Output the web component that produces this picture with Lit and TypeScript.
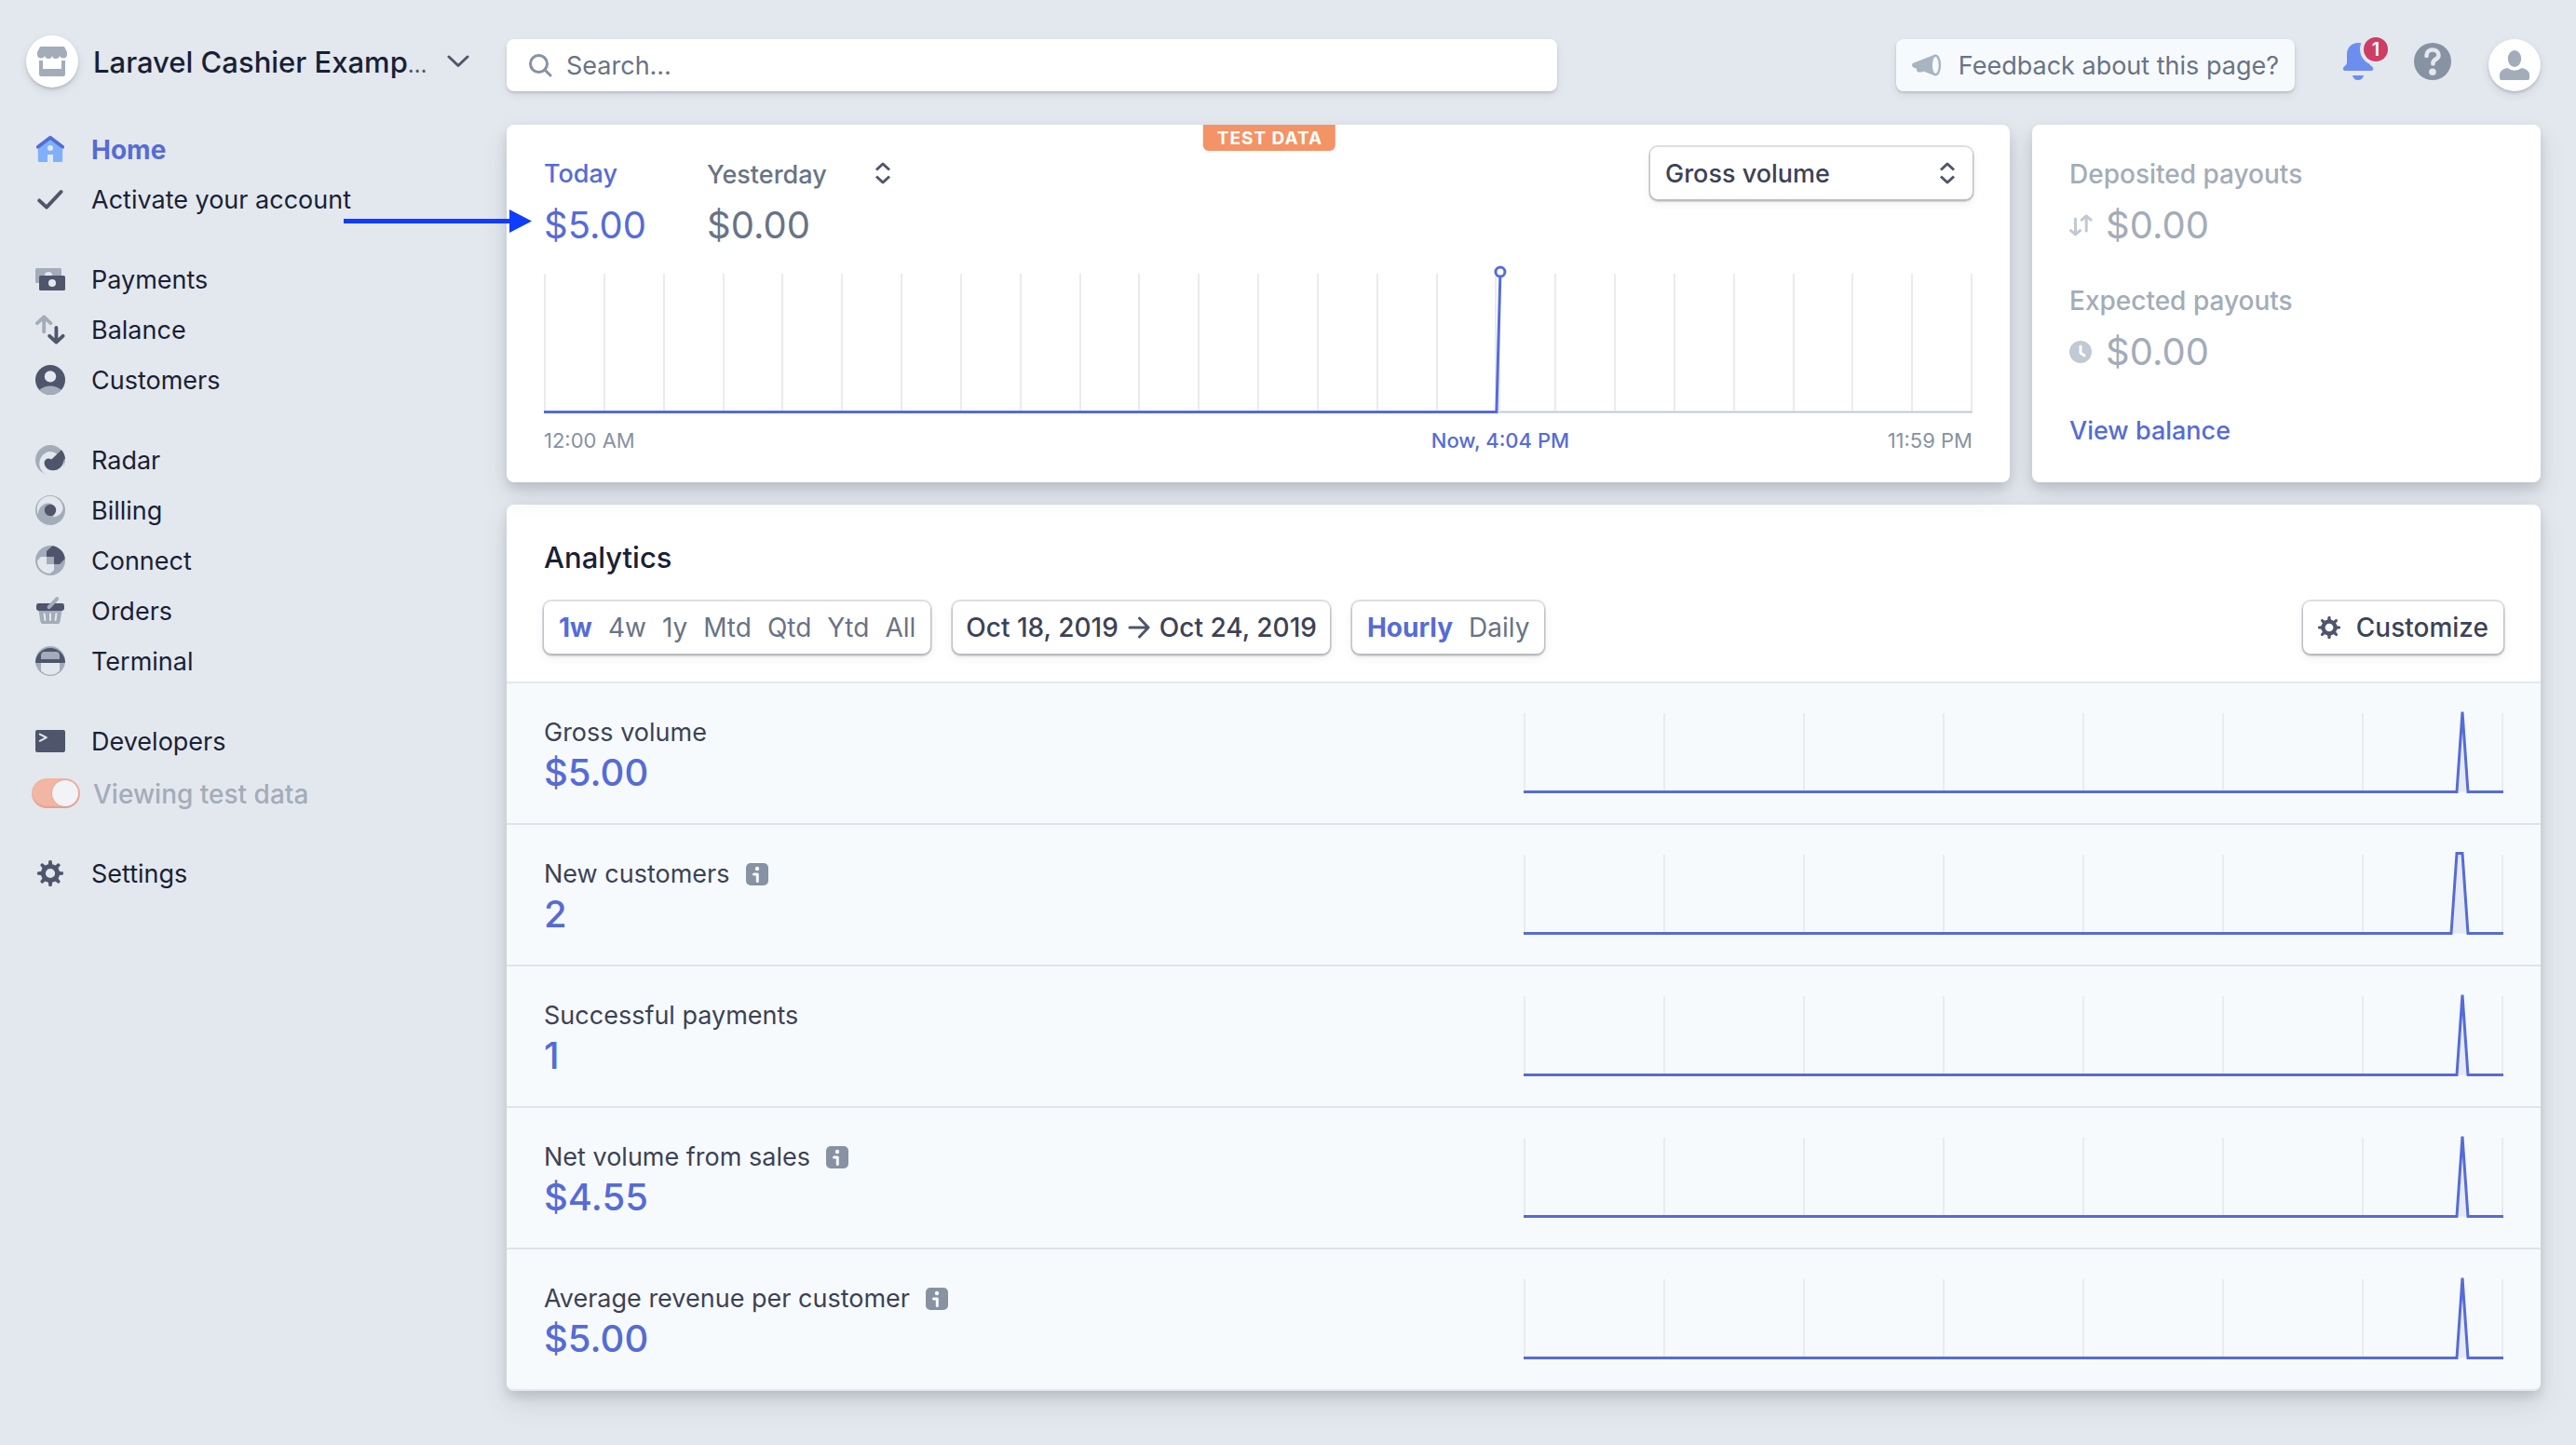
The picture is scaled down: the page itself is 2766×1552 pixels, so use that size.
import { LitElement, html, css, svg, nothing } from "lit";
import { customElement, property } from "lit/decorators.js";
import { classMap } from "lit/directives/class-map.js";

const BG = "#e3e8ee";
const DARK = "#4f566b";
const LIGHT = "#a3acb9";

const gearTeeth = [0, 45, 90, 135, 180, 225, 270, 315];
const gear = svg`
  <circle cx="8" cy="8" r="3.8" fill="none" stroke=${DARK} stroke-width="2.5"></circle>
  ${gearTeeth.map(
    (a) => svg`<path d="M6.8 4 7.2 1.1Q8 .8 8.8 1.1L9.2 4z" fill=${DARK} transform="rotate(${a} 8 8)"></path>`
  )}`;

const icons: Record<string, unknown> = {
  home: svg`
    <path d="M8 2.6 1.4 8v6.2c0 .5.4.8.8.8h4.3v-4h3v4h4.3c.5 0 .8-.3.8-.8V8z" fill="#7fb0f9"></path>
    <path d="M1.4 6.9 8 1.9l6.6 5" fill="none" stroke="#556cd6" stroke-width="1.9" stroke-linecap="round" stroke-linejoin="round"></path>
    <circle cx="8" cy="7.5" r="1.5" fill=${BG}></circle>`,
  check: svg`<path d="M2.1 8.7 6 12.3 13.8 4" fill="none" stroke=${DARK} stroke-width="2" stroke-linecap="round" stroke-linejoin="round"></path>`,
  payments: svg`
    <rect x="0" y="2" width="14" height="8" rx=".8" fill=${LIGHT}></rect>
    <circle cx="7" cy="6" r="2" fill=${BG}></circle>
    <rect x="2" y="6" width="14" height="8" rx=".8" fill=${DARK}></rect>
    <circle cx="9" cy="10" r="2" fill=${BG}></circle>`,
  balance: svg`
    <path d="M4.6 1.4V9.2M1 4.6 4.6 1.2 8.2 4.6" fill="none" stroke=${LIGHT} stroke-width="1.9" stroke-linecap="round" stroke-linejoin="round"></path>
    <path d="M11.2 7v7.6M7.6 11.4l3.6 3.4 3.6-3.4" fill="none" stroke=${DARK} stroke-width="1.9" stroke-linecap="round" stroke-linejoin="round"></path>`,
  customers: svg`
    <circle cx="8" cy="8" r="8" fill=${DARK}></circle>
    <circle cx="8" cy="6.2" r="3.1" fill=${BG}></circle>
    <path d="M2.1 13.4C3.7 12.1 5.7 11.3 8 11.3s4.3.8 5.9 2.1A8 8 0 0 1 2.1 13.4z" fill=${LIGHT}></path>`,
  radar: svg`
    <circle cx="8" cy="8" r="8" fill=${LIGHT}></circle>
    <path d="M15.2 8.6A6.6 6.6 0 1 1 7.4 3.5c1.6 0 2.8.4 4 1.3z" fill=${BG}></path>
    <path d="M14 2.6 8.6 7.7C7 6.5 4.8 7.6 4.8 9.6c.1 2.3 2.1 4 4.6 4C12.8 13.6 15 11.2 15.4 7.6L16 7.4C15.9 5.6 15.2 4 14 2.6z" fill=${DARK}></path>`,
  billing: svg`
    <circle cx="8" cy="8" r="8" fill=${LIGHT}></circle>
    <path d="M1.4 10.2A7 7 0 1 1 14.8 6.8C14.6 9.6 12.4 11.6 9.5 11.6L11 8C10.6 5.6 9 4.3 6.9 4.3 3.8 4.3 1.8 6.8 1.4 10.2z" fill=${BG}></path>
    <circle cx="8" cy="8" r="3.1" fill=${DARK}></circle>`,
  connect: svg`
    <circle cx="8" cy="8" r="8" fill=${LIGHT}></circle>
    <path d="M9.1.1A8 8 0 0 1 15.9 7L13 10H6V3z" fill=${DARK}></path>
    <path d="M3 6h7v7.2L7.9 15A7 7 0 0 1 1 8.1z" fill=${BG}></path>
    <rect x="6" y="6" width="4" height="4" fill=${LIGHT}></rect>`,
  orders: svg`
    <path d="M1.7 7.5h12.6l-1 6.2c-.1.8-.7 1.3-1.5 1.3H4.2c-.8 0-1.4-.5-1.5-1.3z" fill=${LIGHT}></path>
    <path d="M4.8 9.6 5.2 13M8 9.6V13M11.2 9.6 10.8 13" stroke=${BG} stroke-width="1" stroke-linecap="round"></path>
    <rect x=".5" y="4" width="15" height="4" rx="1.2" fill=${DARK}></rect>
    <path d="M7.3 6.1 11.6 1.6" stroke=${LIGHT} stroke-width="2" stroke-linecap="round"></path>`,
  terminal: svg`
    <circle cx="8" cy="8" r="8" fill=${LIGHT}></circle>
    <path d="M0 9A8 8 0 0 1 16 9z" fill=${DARK}></path>
    <path d="M3 7V5a2 2 0 0 1 2-2h6a2 2 0 0 1 2 2v2z" fill=${LIGHT}></path>
    <path d="M3 9h10v4.3a7 7 0 0 1-10 0z" fill=${BG}></path>`,
  developers: svg`
    <rect x="0" y="2" width="16" height="12" rx="1" fill=${DARK}></rect>
    <path d="M2.4 4.3 5.9 6.1 2.4 7.9" fill="none" stroke=${BG} stroke-width="1" stroke-linecap="round" stroke-linejoin="round"></path>`,
  settings: gear,
};

const icon = (name: string) => html`<svg class="icon" viewBox="0 0 16 16" aria-hidden="true">${icons[name]}</svg>`;

const stepper = html`<svg class="stepper" viewBox="0 0 18 24" aria-hidden="true">
  <path d="M2 8.5 9 2l7 6.5M2 15.5 9 22l7-6.5" fill="none" stroke="#4f566b" stroke-width="3" stroke-linejoin="round"></path>
</svg>`;

const navGroups = [
  [
    { icon: "home", label: "Home", active: true },
    { icon: "check", label: "Activate your account" },
  ],
  [
    { icon: "payments", label: "Payments" },
    { icon: "balance", label: "Balance" },
    { icon: "customers", label: "Customers" },
  ],
  [
    { icon: "radar", label: "Radar" },
    { icon: "billing", label: "Billing" },
    { icon: "connect", label: "Connect" },
    { icon: "orders", label: "Orders" },
    { icon: "terminal", label: "Terminal" },
  ],
  [{ icon: "developers", label: "Developers", toggle: true }],
  [{ icon: "settings", label: "Settings" }],
] as { icon: string; label: string; active?: boolean; toggle?: boolean }[][];

const spike = [[0, 0], [1002, 0], [1008, 1], [1014, 0], [1052, 0]];
const plateau = [[0, 0], [996, 0], [1002, 1], [1008, 1], [1014, 0], [1052, 0]];

const metrics = [
  { label: "Gross volume", value: "$5.00", info: false, points: spike },
  { label: "New customers", value: "2", info: true, points: plateau },
  { label: "Successful payments", value: "1", info: false, points: spike },
  { label: "Net volume from sales", value: "$4.55", info: true, points: spike },
  { label: "Average revenue per customer", value: "$5.00", info: true, points: spike },
];

const base = css`
  *,
  *::before {
    box-sizing: border-box;
  }
  :host {
    font-family: Inter, "Liberation Sans", sans-serif;
    font-size: 27px;
    line-height: 40px;
    color: #1a1f36;
  }
  button,
  input,
  select {
    font: inherit;
    color: inherit;
    margin: 0;
    padding: 0;
    border: 0;
    background: none;
  }
  a {
    color: inherit;
    text-decoration: none;
  }
  h1,
  h2,
  p {
    margin: 0;
    font-weight: inherit;
    font-size: inherit;
  }
  svg {
    display: block;
    flex: none;
  }
`;

@customElement("side-nav")
export class SideNav extends LitElement {
  static styles = [
    base,
    css`
      :host {
        display: block;
        padding-top: 38px;
      }
      .account {
        display: flex;
        align-items: center;
        gap: 16px;
        margin-left: 28px;
        height: 56px;
        font-size: 31px;
        font-weight: 500;
      }
      .store {
        border-radius: 50%;
        background: #fff;
        box-shadow: 0 4px 10px rgba(60, 66, 87, 0.12), 0 2px 3px rgba(0, 0, 0, 0.14);
      }
      .account-name {
        white-space: nowrap;
        width: 364px;
        padding-top: 4px;
        text-align: left;
      }
      .more {
        font-size: 24px;
        font-weight: 400;
        color: #4f566b;
      }
      .groups {
        display: grid;
        gap: 32px;
        margin-top: 39px;
      }
      .group {
        list-style: none;
        margin: 0;
        padding: 0;
      }
      .item {
        display: flex;
        align-items: center;
        gap: 28px;
        height: 54px;
        padding-left: 38px;
      }
      .text {
        padding-top: 2px;
      }
      .active {
        color: #556cd6;
        font-size: 28px;
        font-weight: 700;
      }
      .icon {
        width: 32px;
        height: 32px;
      }
      .toggle {
        display: flex;
        align-items: center;
        gap: 14px;
        height: 56px;
        padding: 2px 0 0 34px;
        color: #a3acb9;
        font-size: 28px;
        font-weight: 500;
      }
      .switch {
        appearance: none;
        display: flex;
        justify-content: flex-end;
        width: 52px;
        height: 32px;
        padding: 2px;
        border-radius: 16px;
        background: #f2b6a4;
        box-shadow: inset 0 -2px 1px rgba(210, 120, 110, 0.35);
      }
      .switch::before {
        content: "";
        width: 28px;
        height: 28px;
        border-radius: 50%;
        background: #f1f3f6;
        box-shadow: 0 0 0 1px rgba(210, 140, 125, 0.35);
      }
    `,
  ];

  render() {
    return html`
      <button class="account">
        <svg class="store" width="56" height="56" viewBox="0 0 56 56" aria-hidden="true">
          <path
            d="M16 12h24q1 0 1.500 1l2.500 5v2.500a4 4 0 0 1-8 0 4 4 0 0 1-8 1 4 4 0 0 1-8-1 4 4 0 0 1-8 0V18l2.500-5q.5-1 1.500-1z"
            fill="#a3acb9"
          ></path>
          <path d="M14 27h4v9h20v-9h4v15q0 2-2 2H16q-2 0-2-2z" fill="#a3acb9"></path>
        </svg>
        <span class="account-name">Laravel Cashier Examp<span class="more">…</span></span>
        <svg width="24" height="16" viewBox="0 0 24 16" aria-hidden="true">
          <path d="M2 3 12 12.500 22 3" fill="none" stroke="#4f566b" stroke-width="3" stroke-linecap="round" stroke-linejoin="round"></path>
        </svg>
      </button>
      <nav class="groups" aria-label="Main">
        ${navGroups.map(
          (group) => html`<ul class="group">
            ${group.map(
              (item) => html`<li>
                  <a class=${classMap({ item: true, active: !!item.active })} href="#"
                    >${icon(item.icon)}<span class="text">${item.label}</span></a
                  >
                </li>
                ${item.toggle
                  ? html`<li>
                      <label class="toggle"
                        ><input class="switch" type="checkbox" role="switch" checked disabled /><span class="text"
                          >Viewing test data</span
                        ></label
                      >
                    </li>`
                  : nothing}`
            )}
          </ul>`
        )}
      </nav>
    `;
  }
}

@customElement("top-bar")
export class TopBar extends LitElement {
  static styles = [
    base,
    css`
      :host {
        display: flex;
        align-items: center;
        height: 56px;
      }
      .search {
        display: flex;
        align-items: center;
        gap: 15px;
        flex: 0 1 1128px;
        height: 56px;
        padding: 0 24px;
        border-radius: 8px;
        background: #fff;
        box-shadow: 0 4px 10px rgba(60, 66, 87, 0.08), 0 2px 3px rgba(0, 0, 0, 0.14);
      }
      .field {
        flex: 1;
        min-width: 0;
        padding-top: 2px;
        outline: 0;
      }
      .field::placeholder {
        color: #697386;
        opacity: 1;
      }
      .actions {
        display: flex;
        align-items: center;
        gap: 40px;
        margin-left: auto;
      }
      .feedback {
        display: flex;
        align-items: center;
        gap: 18px;
        height: 56px;
        padding: 0 17px;
        margin-right: 8px;
        border-radius: 8px;
        background: #f7fafc;
        color: #697386;
        white-space: nowrap;
        box-shadow: 0 4px 10px rgba(60, 66, 87, 0.08), 0 2px 3px rgba(0, 0, 0, 0.14);
      }
      .feedback-text {
        padding-top: 2px;
      }
      .round {
        position: relative;
        width: 40px;
        height: 40px;
        margin-bottom: 8px;
      }
      .count {
        position: absolute;
        left: 26px;
        top: -6px;
        width: 26px;
        height: 26px;
        border-radius: 50%;
        background: #cd3d64;
        box-shadow: 0 0 0 4px #e3e8ee;
        color: #fff;
        font-size: 20px;
        font-weight: 600;
        line-height: 26px;
        text-align: center;
      }
      .avatar {
        width: 56px;
        height: 56px;
        border-radius: 50%;
        background: #fff;
        box-shadow: 0 4px 10px rgba(60, 66, 87, 0.12), 0 2px 3px rgba(0, 0, 0, 0.14);
      }
    `,
  ];

  render() {
    return html`
      <label class="search">
        <svg width="25" height="25" viewBox="0 0 25 25" aria-hidden="true">
          <circle cx="10.500" cy="10.500" r="9" fill="none" stroke="#8792a2" stroke-width="3"></circle>
          <path d="M17 17 23 23" stroke="#8792a2" stroke-width="3" stroke-linecap="round"></path>
        </svg>
        <input class="field" type="text" placeholder="Search…" aria-label="Search" />
      </label>
      <div class="actions">
        <button class="feedback">
          <svg width="32" height="24" viewBox="0 0 32 24" aria-hidden="true">
            <path
              d="M25 .4 1.800 9.400Q0 10.300 0 12t1.800 2.600L5 15.800q-.4 3.200 2 3.800 1.800.4 2.600-.6.600 1.600 1.200 .6L12 18.600 25 23.600z"
              fill="#a8b4c2"
            ></path>
            <ellipse cx="25.300" cy="12" rx="4.600" ry="10.300" fill="#f7fafc" stroke="#a8b4c2" stroke-width="2.400"></ellipse>
          </svg>
          <span class="feedback-text">Feedback about this page?</span>
        </button>
        <button class="round" aria-label="Notifications">
          <svg width="40" height="40" viewBox="0 0 40 40" aria-hidden="true">
            <path
              d="M20 0C13 0 8.200 5 8 12v9c0 2-1.200 3-3 4.500Q3.500 27 4 28.500T6 30h28q1.600 0 2.200-1.500T35 25.500C33 24 32 23 32 21V12C31.800 5 27 0 20 0z"
              fill="#6c8eef"
            ></path>
            <path d="M14 35h12q-1 5-6 5t-6-5z" fill="#6c8eef"></path>
          </svg>
          <span class="count">1</span>
        </button>
        <button class="round" aria-label="Help">
          <svg width="40" height="40" viewBox="0 0 40 40" aria-hidden="true">
            <circle cx="20" cy="20" r="20" fill="#8792a2"></circle>
            <path
              d="M13.500 14C13.500 9.800 16.300 7.500 20 7.500S26.500 10 26.500 13.400C26.500 17.600 20.500 17.800 20.500 21.500V22.500"
              fill="none" stroke="#e3e8ee" stroke-width="4.600" stroke-linecap="round"
            ></path>
            <circle cx="20" cy="31.200" r="3.800" fill="#e3e8ee"></circle>
          </svg>
        </button>
        <button class="avatar" aria-label="Profile">
          <svg width="56" height="56" viewBox="0 0 56 56" aria-hidden="true">
            <ellipse cx="28" cy="21" rx="7.200" ry="9" fill="#a3acb9"></ellipse>
            <path d="M20.500 31q3.500 2.800 7.500 2.800t7.500-2.800q8.500 1.500 8.500 7.500v3.500q0 2-2 2H14q-2 0-2-2v-3.500q0-6 8.500-7.500z" fill="#a3acb9"></path>
          </svg>
        </button>
      </div>
    `;
  }
}

@customElement("today-card")
export class TodayCard extends LitElement {
  @property({ type: Number }) minutes = 16 * 60 + 4;

  static styles = [
    base,
    css`
      :host {
        display: block;
        position: relative;
        padding: 24px 40px 29px;
      }
      .badge {
        position: absolute;
        top: 0;
        left: calc(50% + 12px);
        transform: translateX(-50%);
        padding: 2px 14px 0 15px;
        border-radius: 0 0 6px 6px;
        background: #f49365;
        color: #fff;
        font-size: 19px;
        font-weight: 700;
        letter-spacing: 1px;
        line-height: 26px;
        white-space: nowrap;
      }
      .head {
        display: flex;
        align-items: flex-start;
        gap: 64px;
      }
      .label {
        font-weight: 500;
        line-height: 58px;
      }
      .value {
        font-size: 40px;
        line-height: 52px;
      }
      .today {
        min-width: 111px;
        color: #556cd6;
      }
      .previous {
        color: #697386;
      }
      .picker {
        position: relative;
        display: block;
      }
      .select {
        display: block;
        appearance: none;
        width: 100%;
        height: 100%;
        padding-top: 2px;
        font-weight: 500;
        outline: 0;
      }
      .stepper {
        position: absolute;
        right: 18px;
        top: 16px;
        width: 18px;
        height: 24px;
        pointer-events: none;
      }
      .plain {
        width: 216px;
        height: 58px;
      }
      .boxed {
        width: 346px;
        height: 56px;
        margin-left: auto;
        border-radius: 8px;
        color: #3c4257;
        box-shadow: 0 0 0 2px rgba(60, 66, 87, 0.16), 0 2px 1px 1px rgba(0, 0, 0, 0.12), 0 4px 10px rgba(60, 66, 87, 0.1);
      }
      .boxed .select {
        padding-left: 16px;
      }
      .chart {
        width: 100%;
        height: 160px;
        margin-top: 16px;
        overflow: visible;
      }
      .axis {
        position: relative;
        display: flex;
        justify-content: space-between;
        margin-top: 13px;
        color: #8792a2;
        font-size: 22px;
        line-height: 32px;
      }
      .now {
        position: absolute;
        transform: translateX(-50%);
        color: #556cd6;
        font-weight: 500;
        white-space: nowrap;
      }
    `,
  ];

  render() {
    const share = this.minutes / 1440;
    const x = share * 1534;
    const hours = Array.from({ length: 25 }, (_, i) => Math.round(1 + (i * 1532) / 24));
    return html`
      <span class="badge">TEST DATA</span>
      <div class="head">
        <div class="today">
          <p class="label">Today</p>
          <p class="value">$5.00</p>
        </div>
        <div class="previous">
          <label class="picker plain">
            <select class="select" aria-label="Compare with">
              <option>Yesterday</option>
            </select>
            ${stepper}
          </label>
          <p class="value">$0.00</p>
        </div>
        <label class="picker boxed">
          <select class="select" aria-label="Metric">
            <option>Gross volume</option>
          </select>
          ${stepper}
        </label>
      </div>
      <svg class="chart" viewBox="0 0 1534 160" preserveAspectRatio="none" role="img" aria-label="Gross volume today">
        ${hours.map((h) => svg`<path d="M${h} 10V157" stroke="#ebebed" stroke-width="2"></path>`)}
        <path d="M${x - 4} 158.500H1534" stroke="#c1c9d2" stroke-width="2"></path>
        <path d="M${x - 4} 158.500 ${x} 9V158.500z" fill="#e8ebf8"></path>
        <path d="M0 158.500H${x - 4}L${x} 9" fill="none" stroke="#556cd6" stroke-width="3"></path>
        <circle cx=${x} cy="8" r="5" fill="#fff" stroke="#556cd6" stroke-width="3"></circle>
      </svg>
      <div class="axis">
        <span>12:00 AM</span>
        <span class="now" style="left:${share * 100}%">Now, 4:04 PM</span>
        <span>11:59 PM</span>
      </div>
    `;
  }
}

@customElement("payouts-card")
export class PayoutsCard extends LitElement {
  static styles = [
    base,
    css`
      :host {
        display: block;
        padding: 24px 40px 32px;
        color: #a3acb9;
      }
      .label {
        font-size: 28px;
        font-weight: 500;
        line-height: 58px;
      }
      .value {
        display: flex;
        align-items: center;
        gap: 14px;
        font-size: 40px;
        line-height: 52px;
      }
      .second {
        margin-top: 26px;
      }
      .link {
        display: inline-block;
        margin-top: 39px;
        color: #556cd6;
        font-weight: 500;
      }
    `,
  ];

  render() {
    return html`
      <div>
        <p class="label">Deposited payouts</p>
        <p class="value">
          <svg width="25" height="24" viewBox="0 0 25 24" aria-hidden="true">
            <path d="M6.500 5v17M1.600 17.600 6.500 22l4.900-4.400M18.200 18V2M13.300 6.200 18.200 1.800l4.900 4.400" fill="none" stroke="#c1c9d2" stroke-width="3" stroke-linecap="round" stroke-linejoin="round"></path>
          </svg>
          $0.00
        </p>
      </div>
      <div class="second">
        <p class="label">Expected payouts</p>
        <p class="value">
          <svg width="25" height="24" viewBox="0 0 25 24" aria-hidden="true">
            <circle cx="12" cy="12" r="12" fill="#c1c9d2"></circle>
            <path d="M12 6v7l4 2.800" fill="none" stroke="#fff" stroke-width="3" stroke-linecap="round" stroke-linejoin="round"></path>
          </svg>
          $0.00
        </p>
      </div>
      <a class="link" href="#">View balance</a>
    `;
  }
}

@customElement("analytics-card")
export class AnalyticsCard extends LitElement {
  static styles = [
    base,
    css`
      :host {
        display: block;
      }
      .head {
        padding: 36px 40px 30px;
        border-bottom: 2px solid #e3e8ee;
      }
      .title {
        font-size: 31px;
        font-weight: 500;
        line-height: 42px;
      }
      .tools {
        display: flex;
        gap: 24px;
        margin-top: 26px;
        font-size: 28px;
      }
      .box {
        display: flex;
        align-items: center;
        gap: 17px;
        height: 56px;
        padding: 0 16px;
        border-radius: 8px;
        background: #fff;
        color: #697386;
        white-space: nowrap;
        box-shadow: 0 0 0 2px rgba(60, 66, 87, 0.16), 0 2px 1px 1px rgba(0, 0, 0, 0.12), 0 4px 10px rgba(60, 66, 87, 0.1);
      }
      .on {
        color: #556cd6;
        font-weight: 700;
      }
      .dates {
        gap: 10px;
        padding: 0 14px;
        color: #3c4257;
        font-weight: 500;
      }
      .customize {
        margin-left: auto;
        color: #3c4257;
        font-weight: 500;
      }
      .metric {
        display: grid;
        grid-template-columns: 1fr 1fr;
        padding: 30px 40px;
        border-bottom: 2px solid #dfe3ea;
        background: #f7fafc;
      }
      .metric:last-child {
        border-color: #e3e8ee;
        border-radius: 0 0 8px 8px;
      }
      .facts {
        padding-top: 3px;
      }
      .name {
        display: flex;
        align-items: center;
        gap: 17px;
        color: #3c4257;
      }
      .value {
        color: #556cd6;
        font-size: 40px;
        font-weight: 500;
        line-height: 46px;
      }
      .spark {
        width: 100%;
        height: 90px;
        overflow: visible;
      }
    `,
  ];

  render() {
    return html`
      <header class="head">
        <h2 class="title">Analytics</h2>
        <div class="tools">
          <div class="box" role="group" aria-label="Range">
            ${["1w", "4w", "1y", "Mtd", "Qtd", "Ytd", "All"].map(
              (r, i) => html`<button class=${classMap({ on: i === 0 })}>${r}</button>`
            )}
          </div>
          <button class="box dates">
            <span>Oct 18, 2019</span>
            <svg width="24" height="28" viewBox="1 0 24 28" aria-hidden="true">
              <path d="M3 14H22M13.500 4 23 14 13.500 24" fill="none" stroke="#4f566b" stroke-width="3" stroke-linecap="round" stroke-linejoin="round"></path>
            </svg>
            <span>Oct 24, 2019</span>
          </button>
          <div class="box" role="group" aria-label="Interval">
            <button class="on">Hourly</button>
            <button>Daily</button>
          </div>
          <button class="box customize">
            <svg width="24" height="24" viewBox="1 1 14 14" aria-hidden="true">${gear}</svg>
            Customize
          </button>
        </div>
      </header>
      ${metrics.map((m) => {
        const line = m.points.map(([x, y]) => `${x} ${y ? 0.5 : 86.5}`).join("L");
        return html`<section class="metric">
          <div class="facts">
            <p class="name">
              ${m.label}
              ${m.info
                ? html`<svg width="24" height="24" viewBox="0 0 24 24" role="img" aria-label="More information">
                    <rect width="24" height="24" rx="5" fill="#8792a2"></rect>
                    <circle cx="12" cy="6" r="2.200" fill="#f7fafc"></circle>
                    <path d="M8.500 12H12.300V19.500" fill="none" stroke="#f7fafc" stroke-width="3" stroke-linecap="round" stroke-linejoin="round"></path>
                  </svg>`
                : nothing}
            </p>
            <p class="value">${m.value}</p>
          </div>
          <svg class="spark" viewBox="0 0 1052 90" preserveAspectRatio="none" role="img" aria-label="${m.label} trend">
            ${[0, 1, 2, 3, 4, 5, 6, 7].map((i) => svg`<path d="M${1 + i * 150} 2V86" stroke="#e9ecef" stroke-width="2"></path>`)}
            <path d="M${line}" fill="#e6e9f6" stroke="#556cd6" stroke-width="3"></path>
          </svg>
        </section>`;
      })}
    `;
  }
}

@customElement("app-root")
export class AppRoot extends LitElement {
  static styles = [
    base,
    css`
      :host {
        display: grid;
        grid-template-columns: 544px minmax(0, 1fr);
        position: relative;
        min-height: 100vh;
        background: #e3e8ee;
      }
      .main {
        display: grid;
        grid-template-columns: minmax(0, 1614fr) minmax(0, 546fr);
        align-content: start;
        gap: 24px;
        padding: 42px 38px 58px 0;
      }
      .wide {
        grid-column: 1 / -1;
      }
      .bar {
        margin-bottom: 12px;
      }
      .card {
        border-radius: 8px;
        background: #fff;
        box-shadow: 0 14px 28px rgba(60, 66, 87, 0.12), 0 6px 12px rgba(0, 0, 0, 0.12);
      }
      .pointer {
        position: absolute;
        left: 369px;
        top: 225px;
      }
    `,
  ];

  render() {
    return html`
      <side-nav></side-nav>
      <main class="main">
        <top-bar class="wide bar"></top-bar>
        <today-card class="card"></today-card>
        <payouts-card class="card"></payouts-card>
        <analytics-card class="card wide"></analytics-card>
      </main>
      <svg class="pointer" width="202" height="26" viewBox="0 0 202 26" aria-hidden="true">
        <path d="M0 10H178V0L202 12.500 178 25V15H0z" fill="#0f3dff"></path>
      </svg>
    `;
  }
}
